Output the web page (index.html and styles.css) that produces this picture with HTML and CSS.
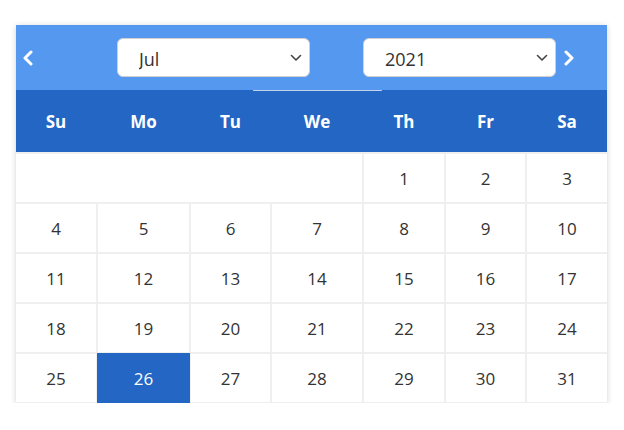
FILE: index.html
```html
<!DOCTYPE html>
<html lang="en">
<head>
  <meta charset="UTF-8" />
  <meta name="viewport" content="width=device-width, initial-scale=1.0"/>
  <title>Date Picker</title>
  <link rel="stylesheet" href="styles.css">
</head>
<body>

<div class="calendar">
  <div class="cal-header">
    <button class="nav-btn prev" aria-label="Previous month">
      <svg width="12" height="16" viewBox="0 0 12 16"><path d="M9 2 L3 8 L9 14" fill="none" stroke="#fff" stroke-width="3" stroke-linecap="round" stroke-linejoin="round"/></svg>
    </button>
    <div class="select-wrap">
      <select class="cal-select">
        <option>Jan</option><option>Feb</option><option>Mar</option><option>Apr</option>
        <option>May</option><option>Jun</option><option selected>Jul</option><option>Aug</option>
        <option>Sep</option><option>Oct</option><option>Nov</option><option>Dec</option>
      </select>
      <svg class="chev" width="12" height="8" viewBox="0 0 12 8"><path d="M1.5 1.5 L6 6 L10.5 1.5" fill="none" stroke="#444" stroke-width="1.6" stroke-linecap="round" stroke-linejoin="round"/></svg>
    </div>
    <div></div>
    <div class="select-wrap">
      <select class="cal-select">
        <option>2019</option><option>2020</option><option selected>2021</option><option>2022</option>
      </select>
      <svg class="chev" width="12" height="8" viewBox="0 0 12 8"><path d="M1.5 1.5 L6 6 L10.5 1.5" fill="none" stroke="#444" stroke-width="1.6" stroke-linecap="round" stroke-linejoin="round"/></svg>
    </div>
    <button class="nav-btn next" aria-label="Next month">
      <svg width="12" height="16" viewBox="0 0 12 16"><path d="M3 2 L9 8 L3 14" fill="none" stroke="#fff" stroke-width="3" stroke-linecap="round" stroke-linejoin="round"/></svg>
    </button>
  </div>

  <div class="weekdays">
    <div>Su</div><div>Mo</div><div>Tu</div><div>We</div><div>Th</div><div>Fr</div><div>Sa</div>
  </div>

  <div class="days">
    <div class="day blank"></div>
    <div class="day">1</div><div class="day">2</div><div class="day">3</div>
    <div class="day">4</div><div class="day">5</div><div class="day">6</div><div class="day">7</div>
    <div class="day">8</div><div class="day">9</div><div class="day">10</div>
    <div class="day">11</div><div class="day">12</div><div class="day">13</div><div class="day">14</div>
    <div class="day">15</div><div class="day">16</div><div class="day">17</div>
    <div class="day">18</div><div class="day">19</div><div class="day">20</div><div class="day">21</div>
    <div class="day">22</div><div class="day">23</div><div class="day">24</div>
    <div class="day">25</div><div class="day selected">26</div><div class="day">27</div><div class="day">28</div>
    <div class="day">29</div><div class="day">30</div><div class="day">31</div>
  </div>
</div>

</body>
</html>
```

FILE: styles.css
```css
body {
  margin: 0;
  background: #fff;
  font-family: "Open Sans", "Noto Sans", sans-serif;
}
.calendar {
  width: 591px;
  margin: 25px 0 0 16px;
  background: #fff;
  box-shadow: 0 1px 6px rgba(0, 0, 0, 0.18);
}
.cal-header {
  position: relative;
  height: 65px;
  background: #5598f0;
  display: grid;
  grid-template-columns: 101px 193px 53px 193px 51px;
  align-items: center;
}
.cal-header::after {
  content: "";
  position: absolute;
  left: 237px;
  width: 129px;
  bottom: -1px;
  height: 1px;
  border-radius: 1px;
  background: #c3d3ea;
}
.nav-btn {
  border: none;
  background: none;
  padding: 0;
  height: 20px;
  cursor: pointer;
  display: flex;
  align-items: center;
}
.nav-btn.prev {
  justify-self: start;
  margin-left: 6px;
}
.nav-btn.next {
  justify-self: start;
  margin-left: 7px;
}
.select-wrap {
  position: relative;
  height: 39px;
}
.cal-select {
  appearance: none;
  -webkit-appearance: none;
  width: 100%;
  height: 100%;
  border: 1px solid #d0d0d0;
  border-radius: 6px;
  background: #fff;
  padding: 3px 0 0 21px;
  font-family: inherit;
  font-size: 18px;
  color: #333;
}
.chev {
  position: absolute;
  right: 8px;
  top: 16px;
  pointer-events: none;
}
.weekdays, .days {
  display: grid;
  grid-template-columns: 80px 91px 79px 90px 80px 79px 80px;
  column-gap: 2px;
}
.weekdays {
  height: 62px;
  background: #2466c4;
  align-items: center;
  text-align: center;
  color: #fff;
  font-weight: 700;
  font-size: 17px;
}
.days {
  background: #efefef;
  row-gap: 2px;
  padding: 2px 0 1px;
  grid-auto-rows: 48px;
}
.day {
  background: #fff;
  display: flex;
  align-items: center;
  justify-content: center;
  font-size: 17px;
  color: #333;
}
.day.blank {
  grid-column: span 4;
}
.day.selected {
  background: #2466c4;
  color: #fff;
  box-shadow: 0 0 0 1px #2466c4;
}
```
